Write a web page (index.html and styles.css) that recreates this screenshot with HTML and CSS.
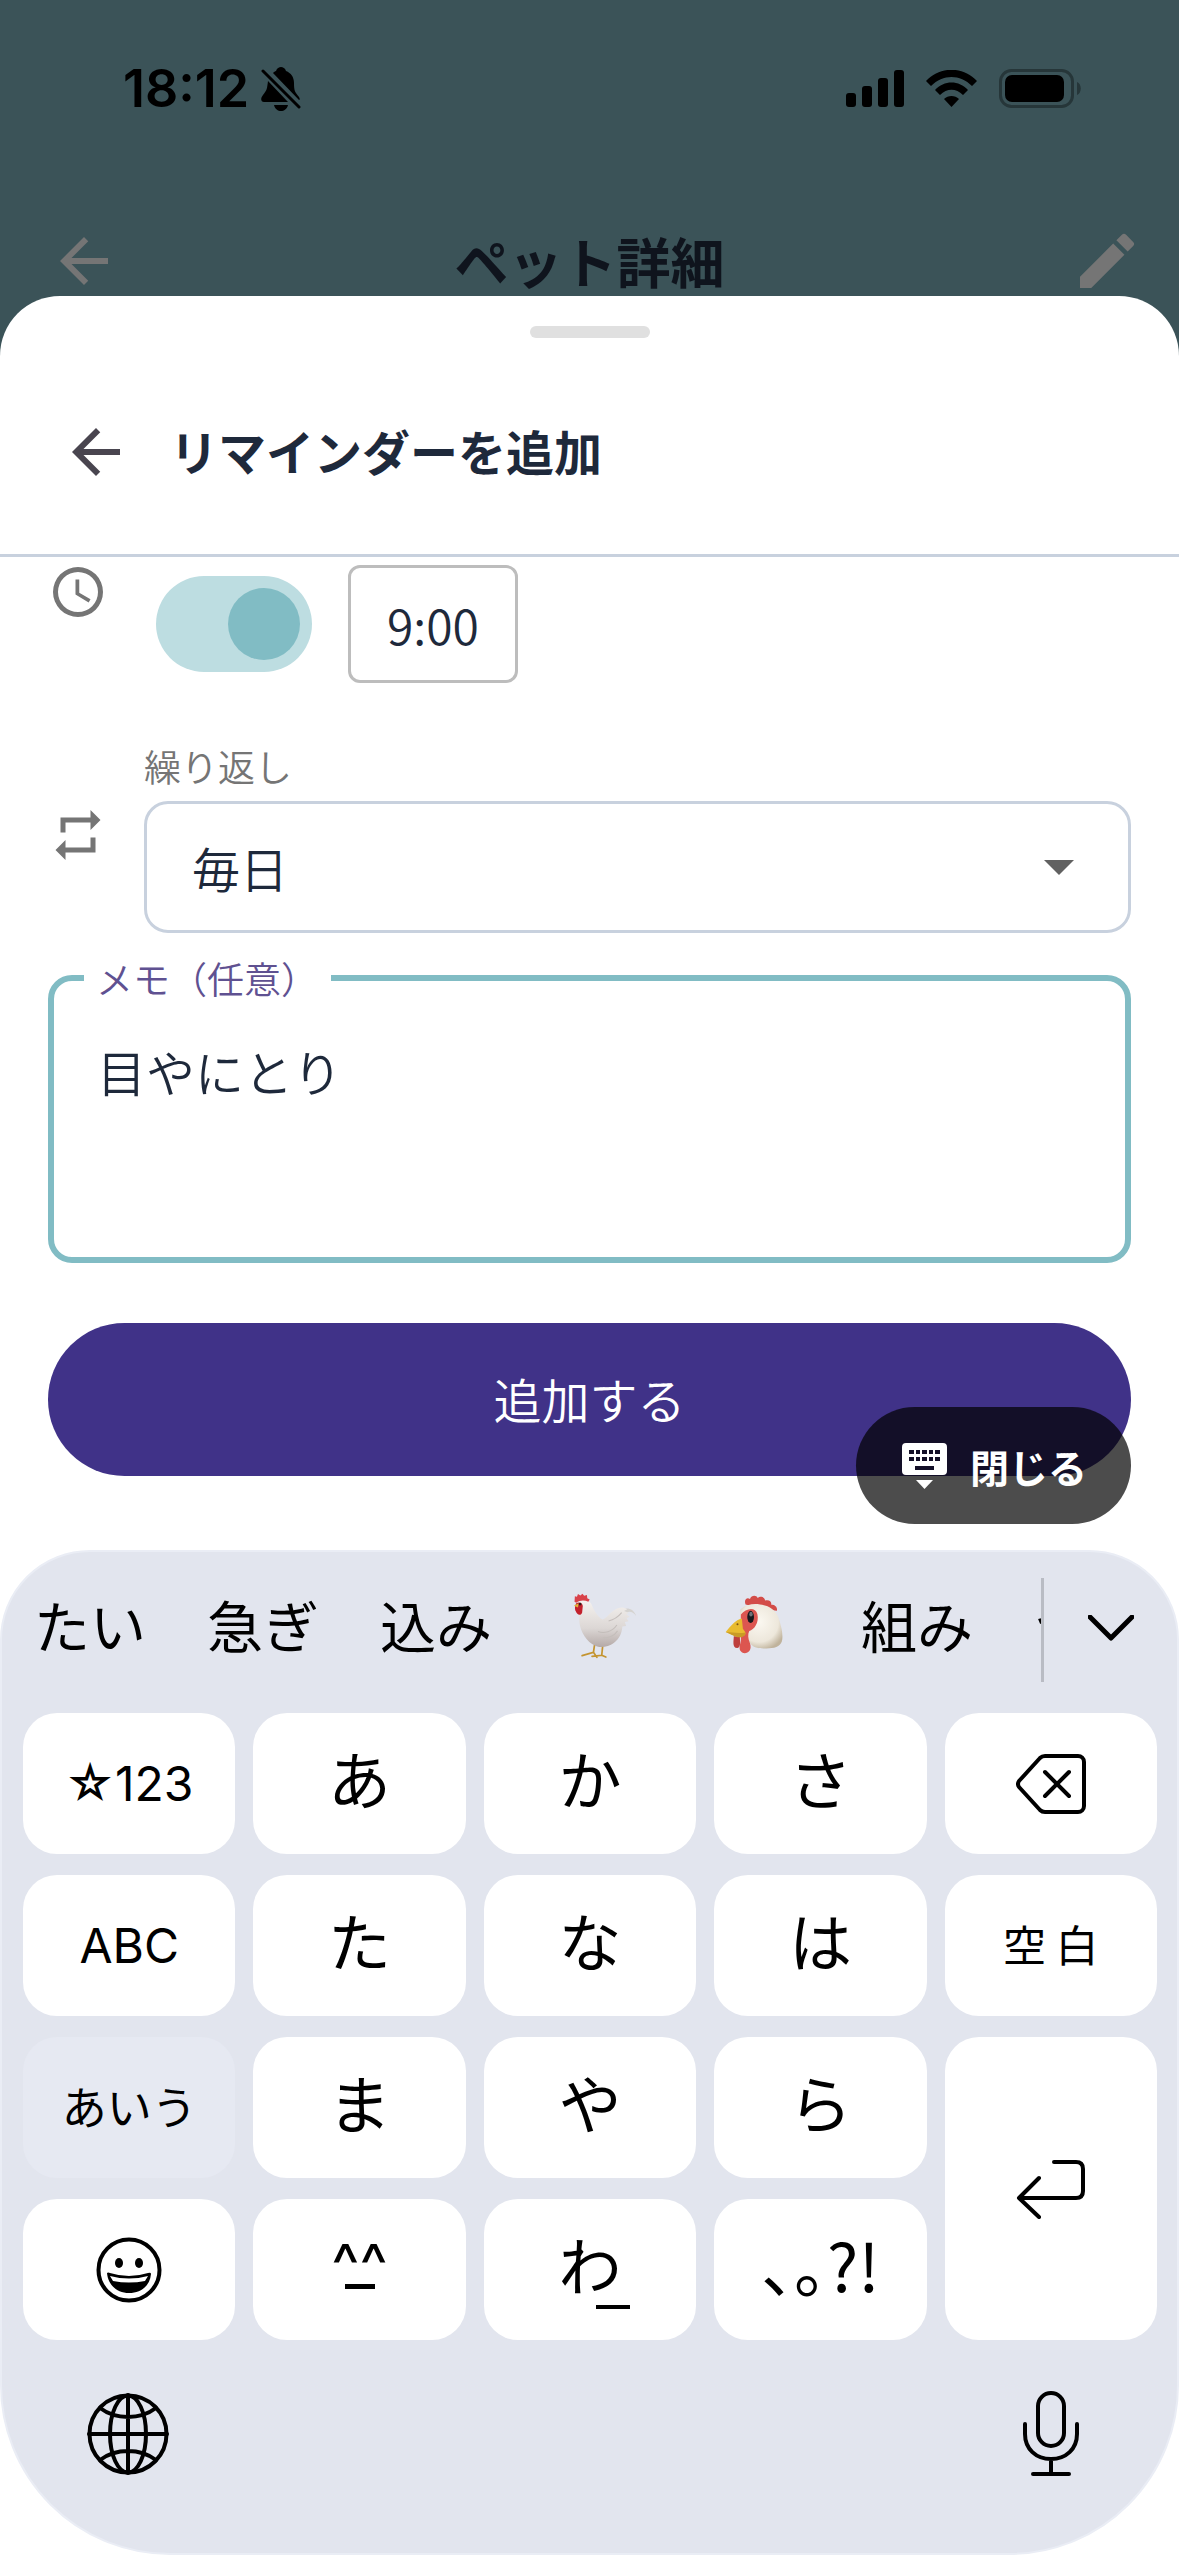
FILE: index.html
```html
<!DOCTYPE html>
<html lang="ja">

<head>
    <meta charset="UTF-8">
    <meta name="viewport" content="width=device-width, initial-scale=1.0">
    <title>リマインダーを追加</title>
    <link rel="stylesheet" href="styles.css">
</head>

<body>
    <div class="backdrop">
        <div class="status-bar">
            <div class="status-left">
                <span class="clock">18:12</span>
                <svg class="bell" viewBox="0 0 40 44">
                    <path d="M12 6c1-1 2-2 3-2 1-3 3-4 5-4s4 1 5 4c5 2 8 6 8 12 0 8 1 9 5 14 1 2 1 3 0 3z" />
                    <path d="M7 14c-1 8-1 9-5 14-3 4-2 7 1 7h24zM13 38h14c-1 4-4 6-7 6s-6-2-7-6z" />
                    <path class="bell-slash" d="M2 4l36 36" />
                </svg>
            </div>
            <div class="status-right">
                <svg class="signal" viewBox="0 0 58 37">
                    <rect x="0" y="23" width="10" height="14" rx="3" />
                    <rect x="16" y="16" width="10" height="21" rx="3" />
                    <rect x="32" y="8" width="10" height="29" rx="3" />
                    <rect x="48" y="0" width="10" height="37" rx="3" />
                </svg>
                <svg class="wifi" viewBox="0 0 51 37">
                    <path d="M0 11C14-4 37-4 51 11l-5 5C34 4 17 4 5 16z" />
                    <path d="M9 20c9-10 24-10 33 0l-5 5c-7-7-16-7-23 0z" />
                    <path d="M18 29c4-4 11-4 15 0l-7.500 8z" />
                </svg>
                <svg class="battery" viewBox="0 0 82 39">
                    <rect x="1.500" y="1.500" width="72" height="36" rx="11" fill="none" stroke="#263639" stroke-width="3" />
                    <rect x="6" y="6" width="59" height="27" rx="7" />
                    <path d="M78 13c5 2 5 11 0 13z" fill="#263639" />
                </svg>
            </div>
        </div>
        <header class="app-bar">
            <button class="icon-button" aria-label="戻る">
                <svg viewBox="0 0 24 24"><path d="M20 11H7.830l5.590-5.590L12 4l-8 8 8 8 1.410-1.410L7.830 13H20v-2z" /></svg>
            </button>
            <h1>ペット詳細</h1>
            <button class="icon-button" aria-label="編集">
                <svg viewBox="0 0 24 24"><path d="M3 17.250V21h3.750L17.810 9.940l-3.750-3.750L3 17.250zM20.710 7.040a1 1 0 0 0 0-1.410l-2.340-2.340a1 1 0 0 0-1.410 0l-1.830 1.830 3.750 3.750 1.830-1.830z" /></svg>
            </button>
        </header>
    </div>

    <main class="sheet">
        <div class="handle"></div>
        <div class="sheet-header">
            <button class="icon-button" aria-label="戻る">
                <svg viewBox="0 0 24 24"><path d="M20 11H7.830l5.590-5.590L12 4l-8 8 8 8 1.410-1.410L7.830 13H20v-2z" /></svg>
            </button>
            <h2>リマインダーを追加</h2>
        </div>

        <form class="form">
            <div class="time-row">
                <svg class="row-icon" viewBox="0 0 24 24"><path d="M12 2a10 10 0 1 0 0 20 10 10 0 0 0 0-20zm0 18a8 8 0 1 1 0-16 8 8 0 0 1 0 16zm.5-13H11v6l5.250 3.150.75-1.230-4.500-2.670z" /></svg>
                <div class="time-controls">
                    <input class="switch" type="checkbox" role="switch" aria-label="時刻を設定" checked>
                    <button class="time-button" type="button">9:00</button>
                </div>
            </div>

            <div class="repeat-row">
                <label for="repeat">繰り返し</label>
                <svg class="row-icon" viewBox="0 0 24 24"><path d="M7 7h10v3l4-4-4-4v3H5v6h2V7zm10 10H7v-3l-4 4 4 4v-3h12v-6h-2v4z" /></svg>
                <div class="select-box">
                    <select id="repeat">
                        <option>毎日</option>
                    </select>
                    <svg class="caret" viewBox="0 0 30 15"><path d="M0 0h30L15 15z" /></svg>
                </div>
            </div>

            <fieldset class="memo">
                <legend><label for="memo">メモ（任意）</label></legend>
                <textarea id="memo">目やにとり</textarea>
            </fieldset>

            <button class="submit" type="button">追加する</button>
        </form>
    </main>

    <section class="keyboard">
        <button class="close-keyboard">
            <svg viewBox="0 0 45 46">
                <path fill-rule="evenodd" d="M4 0h37a4 4 0 0 1 4 4v24a4 4 0 0 1-4 4H4a4 4 0 0 1-4-4V4a4 4 0 0 1 4-4zM7 7v4h5V7zm7 0v4h4V7zm6 0v4h5V7zm7 0v4h4V7zm6 0v4h5V7zM7 14v4h5v-4zm7 0v4h4v-4zm6 0v4h5v-4zm7 0v4h4v-4zm6 0v4h5v-4zM13 23v4h19v-4z" />
                <path d="M14 37h17l-8.500 9z" />
            </svg>
            閉じる
        </button>

        <div class="candidates">
            <div class="candidate-list">
                <button>たい</button>
                <button>急ぎ</button>
                <button>込み</button>
                <button class="emoji" aria-label="にわとり">
                    <svg viewBox="30 48 186 186">
                        <defs>
                            <linearGradient id="feather" x1="0" y1="0" x2="0" y2="1">
                                <stop offset="0" stop-color="#f5f2ef" />
                                <stop offset="0.600" stop-color="#dcd7d5" />
                                <stop offset="1" stop-color="#b5aaa8" />
                            </linearGradient>
                        </defs>
                        <path d="M107 203l-3 20-33 10M104 223l10 15M131 203l-3 29-28 3M128 232l12 5" fill="none" stroke="#c4942f" stroke-width="5" stroke-linecap="round" />
                        <path d="M176 108c16-18 44-16 52 10-12-17-24-15-34-5z" fill="#d5d3d0" />
                        <path d="M60 77c8-9 31-8 38 6 7 16 18 38 32 45 13-3 17-16 37-29 12-8 26-8 35-1l-9 5 14 6-8 4 10 7-9 4 6 9-11 2 4 12-11 1c-1 17-8 36-25 48-15 11-39 15-54 8-24-11-43-39-46-69-2-21 3-36-3-58z" fill="url(#feather)" />
                        <path d="M117 163c17 7 42 1 55-19M131 181c15 2 34-5 43-20M148 132c14-3 29-13 38-24" fill="none" stroke="#c4bebb" stroke-width="3" />
                        <path d="M49 76l1-16 6 2 3-8 7 4 6-5 5 6 8-2 1 9 7 4-4 6c-11-5-25-5-35 3z" fill="#d9424a" />
                        <path d="M54 81c9-6 19 0 19 8l-2 19c-5 11-15 6-18-3-5-8-2-18 1-24z" fill="#c3212c" />
                        <path d="M61 81l-14 7 12 5z" fill="#e2b337" />
                        <circle cx="65" cy="83" r="4" fill="#321b18" />
                    </svg>
                </button>
                <button class="emoji" aria-label="にわとりの顔">
                    <svg viewBox="490 45 190 190">
                        <defs>
                            <radialGradient id="face" cx="0.450" cy="0.400" r="0.650">
                                <stop offset="0" stop-color="#fbf8f1" />
                                <stop offset="0.700" stop-color="#ede7db" />
                                <stop offset="1" stop-color="#c0b39c" />
                            </radialGradient>
                        </defs>
                        <path d="M560 82c-6-15 5-23 13-16 4-12 19-13 23-3 8-8 21-3 22 7 14-3 20 5 18 13 13 0 19 8 17 18l-28-3z" fill="#d34c48" />
                        <path d="M545 96c17-14 38-17 58-14 27 4 45 15 54 38 7 20 14 43 12 65-2 19-17 26-39 27-28 2-48 0-58-17-13-25-34-70-27-99z" fill="url(#face)" />
                        <path d="M546 112c15-20 43-24 49-2 6 27-10 46-24 51-5 9-4 22 2 36 10 30-21 37-29 22-6-13 6-26 1-44z" fill="#dc5650" />
                        <path d="M525 176l18 1c0 15 4 31-7 34-17 1-11-23-11-35z" fill="#be3e3c" />
                        <path d="M501 164c15-17 29-37 48-40l3 30c4 6 11 12 6 19-18 13-40-2-57-9z" fill="#e8bb2f" />
                        <path d="M501 164c20 0 37 5 59 1-1 13-14 16-24 14-12-3-23-10-35-15z" fill="#c99a25" />
                        <ellipse cx="575" cy="119" rx="10" ry="18" fill="#18191d" />
                        <ellipse cx="576" cy="111" rx="5" ry="7" fill="#6f7379" />
                        <circle cx="536" cy="141" r="3" fill="#7b5315" />
                    </svg>
                </button>
                <button>組み</button>
                <button>つ</button>
            </div>
            <button class="expand" aria-label="候補を開く">
                <svg viewBox="0 0 46 26"><path d="M2 2l21 21L44 2" /></svg>
            </button>
        </div>

        <div class="keys">
            <button class="key key-latin">☆123</button>
            <button class="key">あ</button>
            <button class="key">か</button>
            <button class="key">さ</button>
            <button class="key key-graphic" aria-label="削除">
                <svg class="key-icon" viewBox="0 0 70 60">
                    <path d="M29 2h33a6 6 0 0 1 6 6v44a6 6 0 0 1-6 6H29q-3 0-5-2L3 33q-2-3 0-6L24 4q2-2 5-2zM29 18l24 24M53 18L29 42" />
                </svg>
            </button>

            <button class="key key-latin">ABC</button>
            <button class="key">た</button>
            <button class="key">な</button>
            <button class="key">は</button>
            <button class="key key-space">空 白</button>

            <button class="key key-mode">あいう</button>
            <button class="key">ま</button>
            <button class="key">や</button>
            <button class="key">ら</button>
            <button class="key key-graphic key-return" aria-label="改行">
                <svg class="key-icon" viewBox="0 0 70 60">
                    <path d="M38 3h22q7 0 7 7v22q0 7-7 7H3M23 19L3 39l20 19" />
                </svg>
            </button>

            <button class="key key-graphic" aria-label="絵文字">
                <svg class="smile" viewBox="0 0 66 66">
                    <circle cx="33" cy="33" r="30.500" fill="none" stroke="#000" stroke-width="4" />
                    <ellipse cx="23" cy="26" rx="4" ry="5" />
                    <ellipse cx="43" cy="26" rx="4" ry="5" />
                    <path fill-rule="evenodd" d="M11 36q1-1 3 0 19 6 38 0 3-1 3 1c-1 12-10 19-22 19S12 48 11 36zM14 39l3 5q16 3 32 0l3-5q-19 5-38 0z" />
                </svg>
            </button>
            <button class="key key-face">^^<span class="mouth"></span></button>
            <button class="key">わ<span class="low-bar"></span></button>
            <button class="key key-punct">、。?!</button>
        </div>

        <div class="keyboard-footer">
            <button aria-label="キーボードを切り替え">
                <svg class="globe" viewBox="0 0 82 82">
                    <circle cx="41" cy="41" r="38.500" />
                    <ellipse cx="41" cy="41" rx="18" ry="38.500" />
                    <path d="M41 2v78M2 41h78M13 15q12 9 28 9t28-9M13 67q12-9 28-9t28 9" />
                </svg>
            </button>
            <button aria-label="音声入力">
                <svg class="mic" viewBox="0 0 56 86">
                    <rect x="15" y="2" width="26" height="53" rx="13" />
                    <path d="M2 33v10c0 15 11 25 26 25s26-10 26-25V33M28 68v15M10 83h36" />
                </svg>
            </button>
        </div>
    </section>
</body>

</html>
```
FILE: styles.css
```css
* {
    box-sizing: border-box;
}

body {
    margin: 0;
    min-height: 100vh;
    background: #fff;
    color: #1e293b;
    font-family: "Noto Sans CJK JP", sans-serif;
}

button,
select,
textarea {
    margin: 0;
    padding: 0;
    border: 0;
    background: none;
    color: inherit;
    font: inherit;
}

svg {
    display: block;
    flex-shrink: 0;
}

h1,
h2 {
    margin: 0;
    font-weight: 700;
}

/* dimmed page behind the sheet */
.backdrop {
    background: #3b5358;
    height: 356px;
}

.status-bar {
    display: flex;
    justify-content: space-between;
    align-items: center;
    height: 177px;
    padding: 0 98px 0 123px;
    color: #000;
}

.status-left,
.status-right {
    display: flex;
    align-items: center;
}

.status-left {
    gap: 12px;
}

.status-right {
    gap: 22px;
}

.clock {
    font-family: Inter, sans-serif;
    font-size: 52px;
    font-weight: 600;
}

.bell {
    width: 40px;
}

.bell-slash {
    stroke: #000;
    stroke-width: 3;
    stroke-linecap: round;
}

.signal {
    width: 58px;
}

.wifi {
    width: 51px;
}

.battery {
    width: 82px;
}

.app-bar {
    display: flex;
    align-items: center;
    height: 168px;
    padding: 0 36px 0 48px;
    color: #0f141d;
}

.app-bar h1 {
    flex: 1;
    padding-right: 12px;
    font-size: 54px;
    line-height: 80px;
    text-align: center;
}

.app-bar .icon-button {
    color: #757575;
}

.icon-button svg {
    width: 72px;
    fill: currentColor;
}

/* bottom sheet */
.sheet {
    position: relative;
    margin-top: -60px;
    padding: 30px 0 74px;
    border-radius: 60px 60px 0 0;
    background: #fff;
}

.handle {
    width: 120px;
    height: 12px;
    margin: 0 auto;
    border-radius: 6px;
    background: #e0e0e0;
}

.sheet-header {
    display: flex;
    align-items: center;
    gap: 38px;
    padding: 78px 60px 66px;
    border-bottom: 3px solid #c8d1de;
}

.sheet-header h2 {
    padding-bottom: 4px;
    font-size: 48px;
    line-height: 68px;
}

.sheet-header .icon-button {
    color: #49454f;
}

.form {
    padding: 5px 48px 0;
    font-weight: 350;
}

.row-icon {
    width: 60px;
    fill: #757575;
}

.time-row {
    display: flex;
    align-items: flex-start;
    gap: 48px;
}

.time-controls {
    display: flex;
    align-items: center;
    gap: 36px;
    padding-top: 3px;
}

.switch {
    appearance: none;
    width: 156px;
    height: 96px;
    margin: 0;
    padding: 12px;
    border-radius: 48px;
    background: #bddde1;
}

.switch::before {
    content: "";
    display: block;
    width: 72px;
    height: 72px;
    border-radius: 50%;
    background: #81bcc4;
}

.switch:checked::before {
    margin-left: auto;
}

.time-button {
    height: 118px;
    padding: 0 36px;
    border: 3px solid #bdbdbd;
    border-radius: 12px;
    font-size: 48px;
}

.repeat-row {
    display: grid;
    grid-template-columns: 60px 1fr;
    column-gap: 36px;
    row-gap: 8px;
    margin-top: 56px;
}

.repeat-row label {
    grid-column: 2;
    color: #757575;
    font-size: 37px;
    line-height: 54px;
}

.repeat-row .row-icon {
    margin-top: 4px;
}

.select-box {
    display: grid;
    align-items: center;
}

.select-box select,
.select-box .caret {
    grid-area: 1 / 1;
}

.select-box select {
    appearance: none;
    height: 132px;
    padding: 0 45px;
    border: 3px solid #c8d1de;
    border-radius: 24px;
    font-size: 48px;
}

.caret {
    width: 30px;
    margin-right: 57px;
    justify-self: end;
    fill: #616161;
    pointer-events: none;
}

.memo {
    margin: 18px 0 0;
    padding: 0 30px;
    border: 6px solid #81bcc4;
    border-radius: 24px;
}

.memo legend {
    padding: 0 13px 0 12px;
    color: #5f5191;
    font-size: 37px;
    line-height: 54px;
}

.memo textarea {
    display: block;
    width: 100%;
    height: 252px;
    padding: 30px 13px 0;
    outline: none;
    resize: none;
    font-size: 49px;
    line-height: 72px;
}

.submit {
    display: block;
    width: 100%;
    height: 153px;
    margin-top: 60px;
    padding-bottom: 4px;
    border-radius: 77px;
    background: #403288;
    color: #fff;
    font-size: 48px;
}

/* keyboard */
.keyboard {
    position: relative;
    border: 2px solid #eaedf5;
    border-radius: 90px 90px 170px 170px;
    background: #e2e5ee;
    color: #000;
}

.close-keyboard {
    position: absolute;
    right: 46px;
    bottom: 100%;
    display: flex;
    align-items: center;
    gap: 23px;
    height: 117px;
    margin-bottom: 28px;
    padding: 0 44px 0 46px;
    border-radius: 59px;
    background: rgba(0, 0, 0, 0.7);
    color: #fff;
    font-size: 39px;
    font-weight: 700;
}

.close-keyboard svg {
    width: 45px;
    fill: #fff;
}

.candidates {
    display: flex;
    height: 104px;
    margin: 26px 0 31px;
}

.candidate-list {
    display: flex;
    flex: 1;
    align-items: center;
    gap: 61px;
    overflow: hidden;
    padding: 0 0 12px 32px;
    border-right: 3px solid #b9bcc4;
    font-size: 56px;
    line-height: 80px;
    white-space: nowrap;
}

.candidate-list button {
    flex-shrink: 0;
}

.emoji {
    width: 93px;
}

.emoji svg {
    width: 64px;
    margin: 0 auto;
    overflow: visible;
}

.expand {
    width: 133px;
    padding-bottom: 4px;
}

.expand svg {
    width: 46px;
    margin: 0 auto;
    fill: none;
    stroke: #000;
    stroke-width: 5;
    stroke-linecap: round;
    stroke-linejoin: round;
}

.keys {
    display: grid;
    grid-template-columns: repeat(5, 1fr);
    grid-auto-rows: 141px;
    gap: 21px 18px;
    padding: 0 20px 0 21px;
}

.key {
    display: flex;
    justify-content: center;
    align-items: center;
    padding-bottom: 14px;
    border-radius: 34px;
    background: #fff;
    font-size: 63px;
    line-height: 80px;
}

.key-latin {
    padding-bottom: 0;
    font-family: Inter, "Noto Sans CJK JP", sans-serif;
    font-size: 48px;
}

.key-graphic {
    padding-bottom: 0;
}

.key-space {
    padding-bottom: 6px;
    font-size: 43px;
}

.key-mode {
    padding-bottom: 4px;
    background: #e6e9f2;
    font-size: 45px;
}

.key-return {
    grid-row: span 2;
}

.key-icon {
    width: 70px;
    fill: none;
    stroke: #000;
    stroke-width: 4;
    stroke-linecap: round;
    stroke-linejoin: round;
}

.smile {
    width: 66px;
}

.key-face {
    flex-direction: column;
    font-family: Inter, sans-serif;
    font-size: 60px;
    line-height: 56px;
}

.mouth {
    width: 30px;
    height: 5px;
    margin-top: -8px;
    background: #000;
}

.low-bar {
    align-self: flex-end;
    width: 34px;
    height: 4px;
    margin: 0 -9px 17px -25px;
    background: #000;
}

.key-punct {
    font-size: 66px;
    font-feature-settings: "halt";
}

.keyboard-footer {
    display: flex;
    justify-content: space-between;
    align-items: center;
    padding: 51px 98px 76px 85px;
}

.globe {
    width: 82px;
}

.mic {
    width: 56px;
}

.globe,
.mic {
    fill: none;
    stroke: #000;
    stroke-width: 4;
    stroke-linecap: round;
}
```
